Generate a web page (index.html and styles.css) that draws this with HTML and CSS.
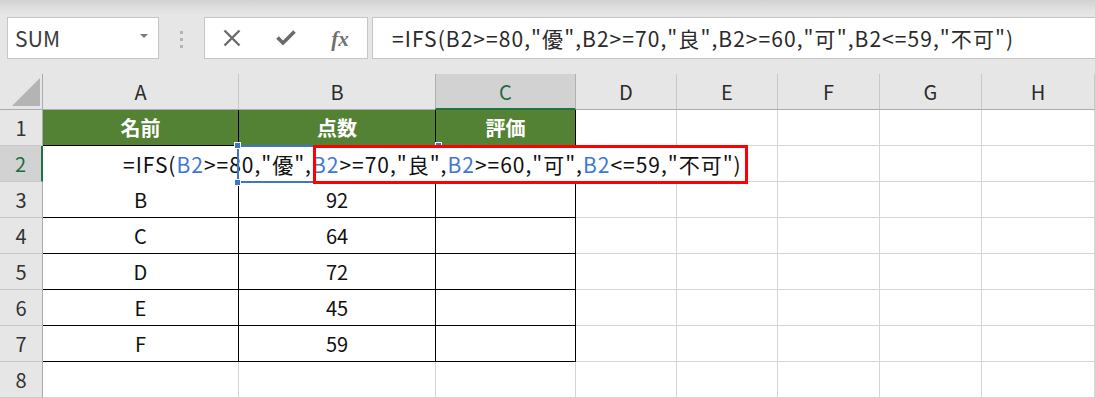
FILE: index.html
```html
<!DOCTYPE html>
<html lang="ja">
<head>
<meta charset="utf-8">
<title>Excel IFS</title>
<link rel="stylesheet" href="styles.css">
</head>
<body>
<div class="app">
  <div class="toolbar">
    <div class="namebox"><span class="name">SUM</span><span class="caret"></span></div>
    <div class="grip"><i></i><i></i><i></i></div>
    <div class="iconbox">
      <span class="slot"><svg width="18" height="18" viewBox="0 0 18 18"><path d="M1.5 1.5 L16.5 16.5 M16.5 1.5 L1.5 16.5" stroke="#6b6b6b" stroke-width="2.4" fill="none"/></svg></span>
      <span class="slot"><svg width="20" height="16" viewBox="0 0 20 16"><path d="M1.5 7.5 L7 13 L18.5 1.5" stroke="#6b6b6b" stroke-width="3.6" fill="none"/></svg></span>
      <span class="slot"><span class="fx">fx</span></span>
    </div>
    <div class="formula">=IFS(B2&gt;=80,"優",B2&gt;=70,"良",B2&gt;=60,"可",B2&lt;=59,"不可")</div>
  </div>
  <div class="sheet">
    <div class="grid">
      <div class="corner"><span class="tri"></span></div>
      <div class="ch">A</div><div class="ch">B</div><div class="ch sel">C</div><div class="ch">D</div><div class="ch">E</div><div class="ch">F</div><div class="ch">G</div><div class="ch">H</div>

      <div class="rh">1</div>
      <div class="c t head">名前</div><div class="c t head">点数</div><div class="c t head">評価</div>
      <div class="c"></div><div class="c"></div><div class="c"></div><div class="c"></div><div class="c"></div>

      <div class="rh sel">2</div>
      <div class="c t"></div><div class="c t"></div><div class="c t"></div>
      <div class="c"></div><div class="c"></div><div class="c"></div><div class="c"></div><div class="c"></div>

      <div class="rh">3</div>
      <div class="c t">B</div><div class="c t">92</div><div class="c t"></div>
      <div class="c"></div><div class="c"></div><div class="c"></div><div class="c"></div><div class="c"></div>

      <div class="rh">4</div>
      <div class="c t">C</div><div class="c t">64</div><div class="c t"></div>
      <div class="c"></div><div class="c"></div><div class="c"></div><div class="c"></div><div class="c"></div>

      <div class="rh">5</div>
      <div class="c t">D</div><div class="c t">72</div><div class="c t"></div>
      <div class="c"></div><div class="c"></div><div class="c"></div><div class="c"></div><div class="c"></div>

      <div class="rh">6</div>
      <div class="c t">E</div><div class="c t">45</div><div class="c t"></div>
      <div class="c"></div><div class="c"></div><div class="c"></div><div class="c"></div><div class="c"></div>

      <div class="rh">7</div>
      <div class="c t">F</div><div class="c t">59</div><div class="c t"></div>
      <div class="c"></div><div class="c"></div><div class="c"></div><div class="c"></div><div class="c"></div>

      <div class="rh">8</div>
      <div class="c"></div><div class="c"></div><div class="c"></div>
      <div class="c"></div><div class="c"></div><div class="c"></div><div class="c"></div><div class="c"></div>
    </div>

    <div class="editor"><span class="etext">=IFS(<span class="ref">B2</span>&gt;=80,"優",<span class="ref">B2</span>&gt;=70,"良",<span class="ref">B2</span>&gt;=60,"可",<span class="ref">B2</span>&lt;=59,"不可")</span></div>
    <div class="refbox"><i class="h tl"></i><i class="h tr"></i><i class="h bl"></i></div>
    <div class="redbox"></div>
  </div>
</div>
</body>
</html>
```

FILE: styles.css
```css
* { box-sizing: border-box; }
html, body { margin: 0; padding: 0; }
body {
  width: 1095px;
  height: 398px;
  overflow: hidden;
  background: #ffffff;
  font-family: "Noto Sans CJK JP", "Noto Sans", sans-serif;
}
.app { width: 1095px; }

/* ---------- toolbar ---------- */
.toolbar {
  height: 74px;
  display: flex;
  align-items: flex-start;
  padding: 17px 0 0 7px;
  background: linear-gradient(#d2d2d2 0px, #e2e2e2 10px, #e6e6e6 16px, #e6e6e6 100%);
}
.namebox {
  width: 152px;
  height: 42px;
  background: #fff;
  border: 1px solid #c6c6c6;
  display: flex;
  align-items: center;
  justify-content: space-between;
  padding: 0 10px 0 7px;
}
.name {
  font-size: 21px;
  color: #3a3a3a;
  letter-spacing: 0.2px;
}
.caret {
  width: 0; height: 0;
  border-left: 4px solid transparent;
  border-right: 4px solid transparent;
  border-top: 4px solid #7a7a7a;
  margin-top: -4px;
}
.grip {
  width: 45px;
  height: 42px;
  display: flex;
  flex-direction: column;
  align-items: center;
  justify-content: center;
  gap: 4px;
  padding-top: 2px;
}
.grip i { display: block; width: 3px; height: 3px; background: #b3b3b3; }
.iconbox {
  width: 164px;
  height: 42px;
  background: #fff;
  border: 1px solid #c6c6c6;
  display: flex;
  align-items: center;
}
.slot {
  width: 54px;
  height: 100%;
  display: flex;
  align-items: center;
  justify-content: center;
}
.slot svg { display: block; }
.fx {
  font-family: "Liberation Serif", "DejaVu Serif", serif;
  font-style: italic;
  font-weight: bold;
  font-size: 21px;
  color: #707070;
  margin-top: 2px;
}
.formula {
  flex: 1;
  margin-left: 4px;
  height: 42px;
  background: #fff;
  border: 1px solid #c6c6c6;
  border-right: none;
  font-size: 21px;
  letter-spacing: 1.05px;
  line-height: 40px;
  color: #2a2a2a;
  padding-left: 19px;
  white-space: nowrap;
}

/* ---------- sheet ---------- */
.sheet { position: relative; }
.grid {
  display: grid;
  grid-template-columns: 43px 196px 197px 140px 101px 101px 102px 102px 113px;
  grid-template-rows: repeat(9, 36px);
}
.corner {
  background: #e6e6e6;
  border-right: 1px solid #ababab;
  border-bottom: 1px solid #ababab;
  position: relative;
}
.tri {
  position: absolute;
  right: 2px;
  bottom: 3px;
  width: 0; height: 0;
  border-left: 28px solid transparent;
  border-bottom: 28px solid #b4b4b4;
}
.ch {
  background: #e6e6e6;
  border-right: 1px solid #c8c8c8;
  border-bottom: 1px solid #ababab;
  font-size: 20px;
  color: #2b2b2b;
  display: flex;
  align-items: center;
  justify-content: center;
}
.ch.sel {
  background: #d2d2d2;
  color: #1d6b40;
  border-left: 1px solid #b0b0b0;
  border-right: 1px solid #b0b0b0;
  border-bottom: 2px solid #217346;
  margin-left: -1px;
}
.rh {
  background: #e6e6e6;
  border-right: 1px solid #ababab;
  border-bottom: 1px solid #c8c8c8;
  font-size: 20px;
  color: #333;
  display: flex;
  align-items: center;
  justify-content: center;
}
.rh.sel {
  background: #d2d2d2;
  color: #1d6b40;
  border-right: 2px solid #217346;
}
.c {
  border-right: 1px solid #d4d4d4;
  border-bottom: 1px solid #d4d4d4;
  font-size: 20px;
  color: #111;
  display: flex;
  align-items: center;
  justify-content: center;
}
.c.t {
  border-right-color: #000;
  border-bottom-color: #000;
}
.c.head {
  background: #548235;
  color: #fff;
  font-weight: bold;
}

/* editing overlay in row 2 */
.editor {
  position: absolute;
  left: 43px;
  top: 72px;
  width: 703px;
  height: 36px;
  background: #fff;
  padding-left: 80px;
  font-size: 21px;
  letter-spacing: 0.98px;
  line-height: 36px;
  color: #111;
  white-space: nowrap;
}
.ref { color: #3c78d8; }
.refbox {
  position: absolute;
  left: 237px;
  top: 71px;
  width: 200px;
  height: 38px;
  border-left: 2px solid #3f74c8;
  border-top: 2px solid #3f74c8;
  border-bottom: 2px solid #3f74c8;
}
.refbox .h {
  position: absolute;
  width: 5px; height: 5px;
  background: #3f74c8;
  border: 1px solid #fff;
  box-sizing: content-box;
}
.refbox .tl { left: -5px; top: -5px; }
.refbox .tr { right: -5px; top: -5px; }
.refbox .bl { left: -5px; bottom: -5px; }
.redbox {
  position: absolute;
  left: 313px;
  top: 71px;
  width: 435px;
  height: 39px;
  border: 3px solid #ff0000;
}
```
